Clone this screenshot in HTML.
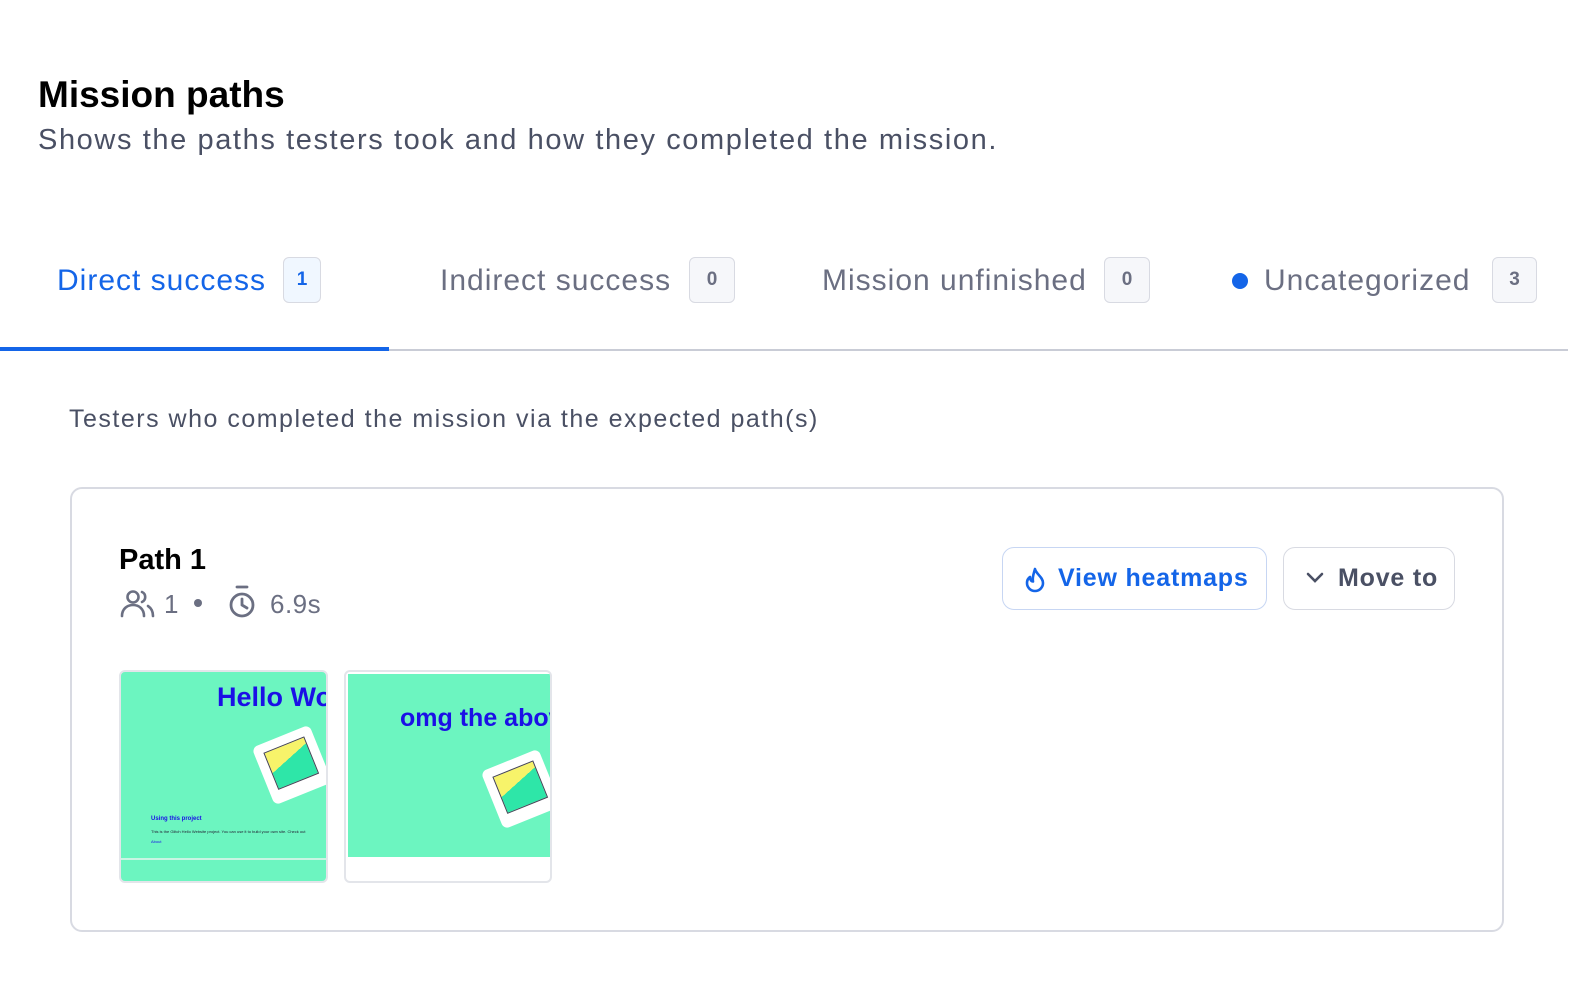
<!DOCTYPE html>
<html><head><meta charset="utf-8"><style>
*{margin:0;padding:0;box-sizing:border-box}
body{width:1588px;height:990px;background:#fff;font-family:"Liberation Sans",sans-serif;position:relative;overflow:hidden}
.a{position:absolute;white-space:nowrap}
.badge{position:absolute;height:46px;border:1.5px solid #d8dae2;border-radius:6px;background:#f6f7fa;color:#6b6f82;font-weight:bold;font-size:19px;text-align:center;line-height:43px}
.tab{position:absolute;top:264px;font-size:30px;color:#6b6f82;letter-spacing:1px}
.btn{position:absolute;top:547px;height:63px;border:1.5px solid #d8dae2;border-radius:12px;font-weight:bold;font-size:25px;line-height:60px;letter-spacing:0.8px}
</style></head><body>
<div class="a" style="left:38px;top:74px;font-size:37px;font-weight:bold;color:#000">Mission paths</div>
<div class="a" style="left:38px;top:124px;font-size:29px;color:#4a5064;letter-spacing:1.6px">Shows the paths testers took and how they completed the mission.</div>

<div class="tab" style="left:57px;color:#1465e8">Direct success</div>
<div class="badge" style="left:283px;top:257px;width:38px;background:#f0f7ff;color:#1465e8">1</div>
<div class="tab" style="left:440px">Indirect success</div>
<div class="badge" style="left:689px;top:257px;width:46px">0</div>
<div class="tab" style="left:822px">Mission unfinished</div>
<div class="badge" style="left:1104px;top:257px;width:46px">0</div>
<div class="a" style="left:1232px;top:273px;width:16px;height:16px;border-radius:50%;background:#1465e8"></div>
<div class="tab" style="left:1264px">Uncategorized</div>
<div class="badge" style="left:1492px;top:257px;width:45px">3</div>
<div class="a" style="left:0;top:349px;width:1568px;height:2px;background:#c9ccd6"></div>
<div class="a" style="left:0;top:347px;width:389px;height:4px;background:#1465e8"></div>

<div class="a" style="left:69px;top:405px;font-size:25px;color:#4a5064;letter-spacing:1.5px">Testers who completed the mission via the expected path(s)</div>

<div class="a" style="left:70px;top:487px;width:1434px;height:445px;border:2px solid #d8dae2;border-radius:12px"></div>
<div class="a" style="left:119px;top:544px;font-size:29px;font-weight:bold;color:#000">Path 1</div>
<svg class="a" style="left:120px;top:588px" width="36" height="30" viewBox="0 0 36 30" fill="none" stroke="#6b6f82" stroke-width="2.6" stroke-linecap="round"><circle cx="13" cy="9" r="5.5"/><path d="M2 28c0-7 5-11 11-11s11 4 11 11"/><path d="M22 4a5.5 5.5 0 0 1 0 10M28 18c3 2 5 5 5 10"/></svg>
<div class="a" style="left:164px;top:589px;font-size:26px;color:#6b6f82">1</div>
<div class="a" style="left:194px;top:599px;width:8px;height:8px;border-radius:50%;background:#6b6f82"></div>
<svg class="a" style="left:226px;top:584px" width="32" height="36" viewBox="0 0 32 36" fill="none" stroke="#6b6f82" stroke-width="2.8" stroke-linecap="round"><path d="M11 3h10"/><circle cx="16" cy="21" r="11"/><path d="M16 21V15M16 21l5 3"/></svg>
<div class="a" style="left:270px;top:589px;font-size:26px;color:#6b6f82;letter-spacing:0.5px">6.9s</div>

<div class="btn" style="left:1002px;width:265px;border-color:#c7d6f3;color:#1465e8">
<svg style="position:absolute;left:20px;top:19px" width="24" height="26" viewBox="0 0 24 26" fill="none" stroke="#1465e8" stroke-width="2.6" stroke-linejoin="round"><path d="M12 2c1 5 8 8 8 14a8 8 0 0 1-16 0c0-3 1.5-5 3-6 0 3 1.5 4.5 3 4.5C9 10 11 6 12 2z"/></svg>
<span style="position:absolute;left:55px">View heatmaps</span></div>
<div class="btn" style="left:1283px;width:172px;color:#4a5064">
<svg style="position:absolute;left:22px;top:24px" width="18" height="12" viewBox="0 0 18 12" fill="none" stroke="#4a5064" stroke-width="2.6" stroke-linecap="round"><path d="M2 2l7 7 7-7"/></svg>
<span style="position:absolute;left:54px">Move to</span></div>

<div class="a" style="left:119px;top:670px;width:209px;height:213px;border:2px solid #e3e5ea;border-radius:6px;overflow:hidden;background:#6cf5c0">
 <div class="a" style="left:96px;top:10px;font-size:27px;font-weight:bold;color:#1b10e6">Hello World</div>
 <div class="a" style="left:140px;top:62px;width:62px;height:62px;background:#fff;transform:rotate(-22deg);border-radius:6px"><div style="margin:9px;height:40px;background:linear-gradient(160deg,#f7f36a 40%,#2ee6a8 40%);border:1px solid #445"></div></div>
 <div class="a" style="left:30px;top:144px;font-size:6px;font-weight:bold;color:#1b10e6">Using this project</div>
 <div class="a" style="left:30px;top:157px;font-size:4px;color:#223">This is the Glitch Hello Website project. You can use it to build your own site. Check out</div>
 <div class="a" style="left:30px;top:167px;font-size:4px;color:#1b10e6">About</div>
 <div class="a" style="left:0;top:186px;width:209px;height:1.5px;background:#c9f5e3"></div>
</div>
<div class="a" style="left:344px;top:670px;width:208px;height:213px;border:2px solid #e3e5ea;border-radius:6px;overflow:hidden;background:#fff">
 <div class="a" style="left:2px;top:2px;width:204px;height:183px;background:#6cf5c0;overflow:hidden">
  <div class="a" style="left:52px;top:30px;font-size:25px;font-weight:bold;color:#1b10e6">omg the above</div>
  <div class="a" style="left:142px;top:84px;width:62px;height:62px;background:#fff;transform:rotate(-22deg);border-radius:6px"><div style="margin:9px;height:40px;background:linear-gradient(160deg,#f7f36a 40%,#2ee6a8 40%);border:1px solid #445"></div></div>
 </div>
</div>
</body></html>
